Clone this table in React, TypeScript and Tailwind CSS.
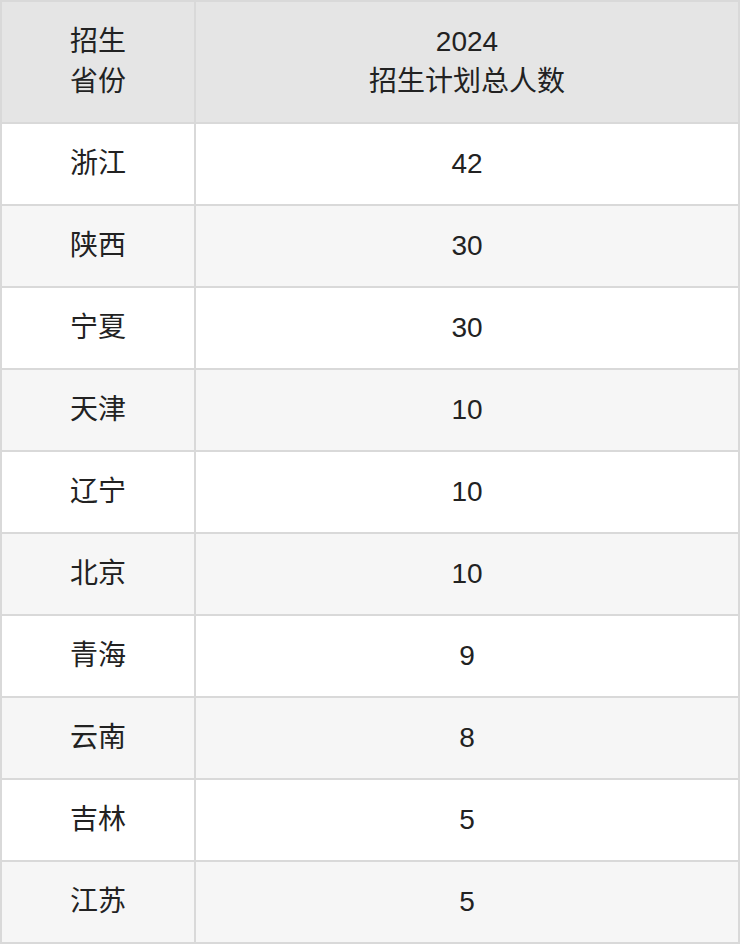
const rows = [
  { province: "浙江", count: 42 },
  { province: "陕西", count: 30 },
  { province: "宁夏", count: 30 },
  { province: "天津", count: 10 },
  { province: "辽宁", count: 10 },
  { province: "北京", count: 10 },
  { province: "青海", count: 9 },
  { province: "云南", count: 8 },
  { province: "吉林", count: 5 },
  { province: "江苏", count: 5 },
];

const App = () => {
  return (
    <div className="w-[740px] bg-white font-['Liberation_Sans','Noto_Sans_CJK_SC',sans-serif] text-[28px] leading-[40px] text-[#222222]">
      <table className="w-full border-collapse border-2 border-[#d9d9d9] text-center">
        <thead>
          <tr className="bg-[#e5e5e5]">
            <th className="w-[194px] border-2 border-[#d9d9d9] py-[20px] font-normal">
              招生
              <br />
              省份
            </th>
            <th className="border-2 border-[#d9d9d9] py-[20px] font-normal">
              2024
              <br />
              招生计划总人数
            </th>
          </tr>
        </thead>
        <tbody>
          {rows.map((row, index) => (
            <tr key={index} className={index % 2 === 0 ? "bg-white" : "bg-[#f6f6f6]"}>
              <td className="border-2 border-[#d9d9d9] py-[20px]">{row.province}</td>
              <td className="border-2 border-[#d9d9d9] py-[20px]">{row.count}</td>
            </tr>
          ))}
        </tbody>
      </table>
    </div>
  );
};

export default App;
